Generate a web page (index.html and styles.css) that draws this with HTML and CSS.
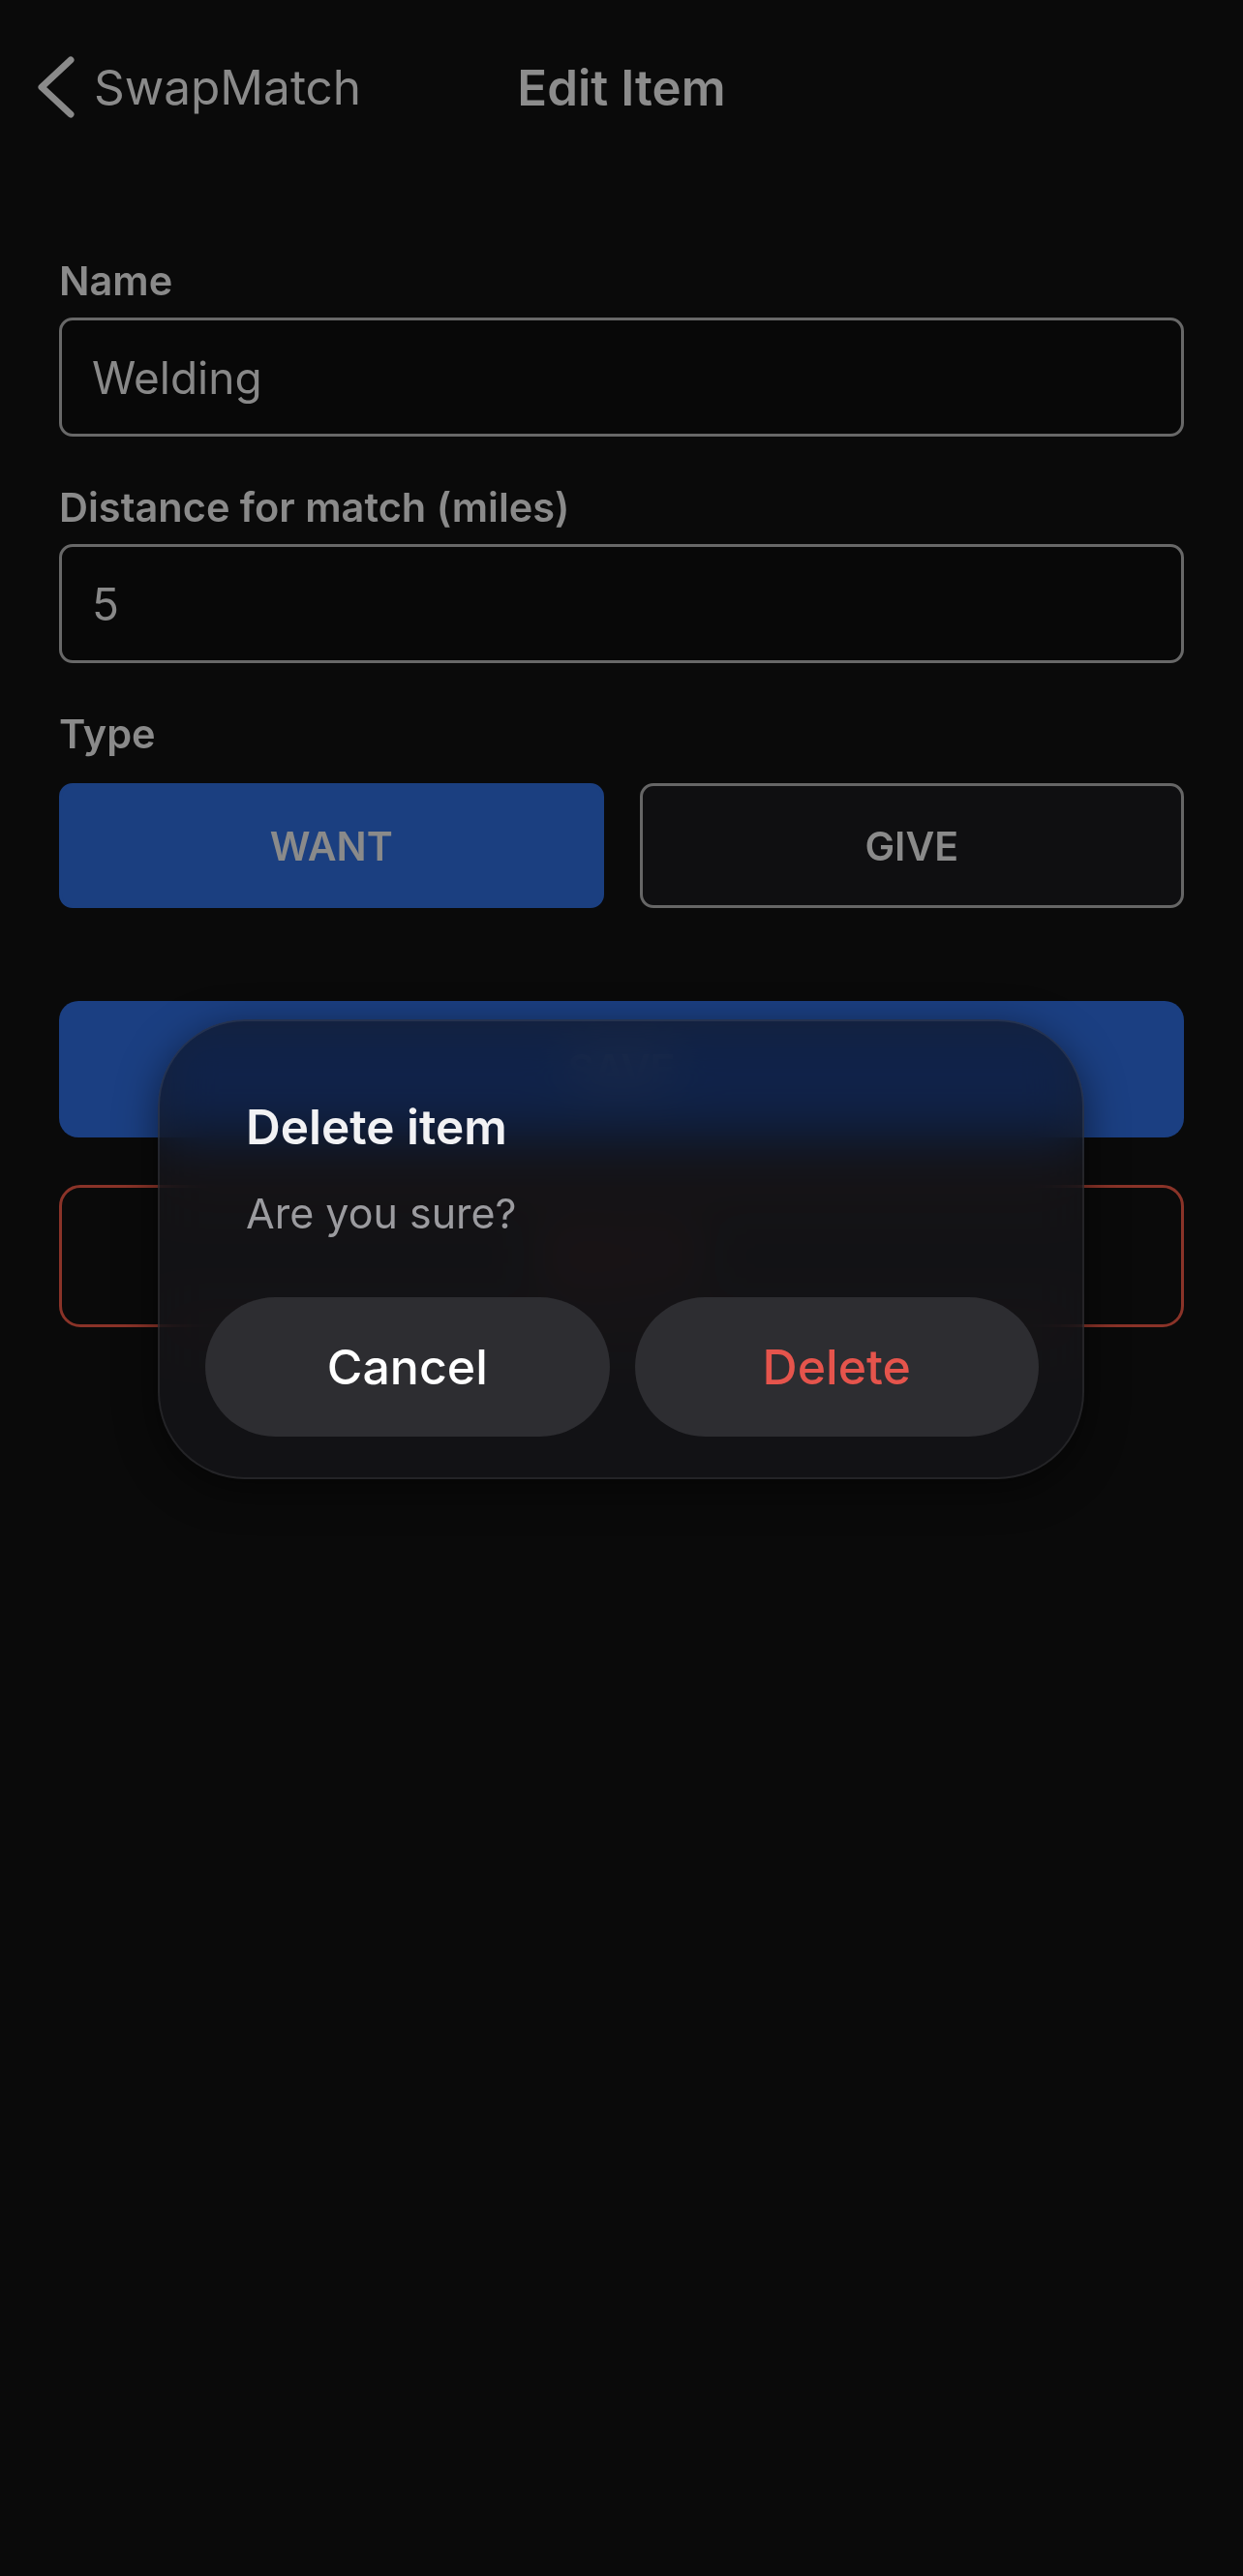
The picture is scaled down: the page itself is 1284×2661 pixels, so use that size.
FILE: index.html
```html
<!DOCTYPE html>
<html lang="en">
<head>
    <meta charset="UTF-8">
    <meta name="viewport" content="width=device-width, initial-scale=1.0">
    <title>Edit Item</title>
    <link rel="stylesheet" href="styles.css">
</head>
<body>
    <header class="top-bar">
        <a class="back-link" href="#">
            <svg class="back-icon" width="44" height="64" viewBox="0 0 44 64">
                <polyline points="36,4 6,32 36,60" fill="none" stroke="#8a8a8a" stroke-width="7" stroke-linecap="round" stroke-linejoin="round"/>
            </svg>
            <span>SwapMatch</span>
        </a>
        <h1 class="page-title">Edit Item</h1>
        <div></div>
    </header>

    <form class="edit-form">
        <div class="field">
            <label class="field-label">Name</label>
            <div class="text-input">Welding</div>
        </div>
        <div class="field">
            <label class="field-label">Distance for match (miles)</label>
            <div class="text-input">5</div>
        </div>
        <div class="field">
            <label class="field-label type-label">Type</label>
            <div class="type-toggle">
                <div class="type-option selected">WANT</div>
                <div class="type-option">GIVE</div>
            </div>
        </div>
        <div class="save-btn">SAVE</div>
        <div class="delete-btn">DELETE</div>
    </form>

    <!-- confirm dialog -->
    <div class="dialog">
        <h2 class="dialog-title">Delete item</h2>
        <p class="dialog-text">Are you sure?</p>
        <div class="dialog-actions">
            <button class="dialog-btn">Cancel</button>
            <button class="dialog-btn danger">Delete</button>
        </div>
    </div>
</body>
</html>
```
FILE: styles.css
```css
body {
    margin: 0;
    padding: 0;
    min-height: 100vh;
    background-color: #0a0a0a;
    font-family: Inter, "Noto Sans", sans-serif;
    color: #8a8a8a;
    position: relative;
}

/* top bar */
.top-bar {
    height: 180px;
    display: grid;
    grid-template-columns: 1fr auto 1fr;
    align-items: center;
}
.back-link {
    display: flex;
    align-items: center;
    padding-left: 37px;
    color: #8a8a8a;
    text-decoration: none;
    font-size: 49.5px;
}
.back-icon {
    margin-right: 16px;
}
.page-title {
    margin: 0;
    font-size: 51px;
    font-weight: 600;
    color: #8c8c8c;
}

/* form */
.edit-form {
    padding: 87px 61px 0 61px;
}
.field {
    margin-bottom: 50px;
}
.field-label {
    display: block;
    font-size: 41.5px;
    line-height: 46px;
    font-weight: 600;
    color: #8a8a8a;
    margin-bottom: 15px;
}
.type-label {
    margin-bottom: 28px;
}
.text-input {
    box-sizing: border-box;
    height: 123px;
    border: 3px solid #686868;
    border-radius: 14px;
    background-color: #080808;
    padding-left: 31px;
    display: flex;
    align-items: center;
    font-size: 46px;
    color: #888;
}
.type-toggle {
    display: flex;
    gap: 37px;
}
.type-option {
    flex: 1;
    height: 129px;
    box-sizing: border-box;
    display: flex;
    align-items: center;
    justify-content: center;
    border-radius: 14px;
    border: 3px solid #666;
    background-color: #0f0f11;
    font-size: 41px;
    font-weight: 600;
    color: #8a8a8a;
}
.type-option.selected {
    background-color: #1b3f80;
    border-color: #1b3f80;
}
.save-btn {
    margin-top: 96px;
    height: 141px;
    border-radius: 20px;
    background-color: #1b3f82;
    display: flex;
    align-items: center;
    justify-content: center;
    font-size: 42px;
    font-weight: 600;
    color: #7f8aa0;
}
.delete-btn {
    margin-top: 49px;
    height: 147px;
    box-sizing: border-box;
    border: 3px solid #8a3328;
    border-radius: 22px;
    display: flex;
    align-items: center;
    justify-content: center;
    font-size: 42px;
    font-weight: 600;
    color: #5a241e;
}

/* dialog over the form */
.dialog {
    position: absolute;
    left: 163px;
    top: 1053px;
    width: 957px;
    height: 475px;
    box-sizing: border-box;
    padding: 80px 45px 46px 47px;
    border-radius: 90px;
    background-color: rgba(22, 22, 27, 0.72);
    backdrop-filter: blur(28px) saturate(190%);
    border: 2px solid rgba(255, 255, 255, 0.08);
    box-shadow: 0 10px 40px rgba(0, 0, 0, 0.5);
}
.dialog-title {
    margin: 0 0 35px 42px;
    font-size: 49.5px;
    line-height: 58px;
    font-weight: 600;
    color: #f2f2f4;
}
.dialog-text {
    margin: 0 0 62px 42px;
    font-size: 43px;
    line-height: 50px;
    color: #9b9b9f;
}
.dialog-actions {
    display: flex;
    gap: 26px;
}
.dialog-btn {
    flex: 1;
    height: 144px;
    border: none;
    border-radius: 72px;
    background-color: #2d2d31;
    font-family: Inter, "Noto Sans", sans-serif;
    font-size: 50px;
    font-weight: 500;
    color: #ffffff;
}
.dialog-btn.danger {
    color: #e5544c;
}
```
